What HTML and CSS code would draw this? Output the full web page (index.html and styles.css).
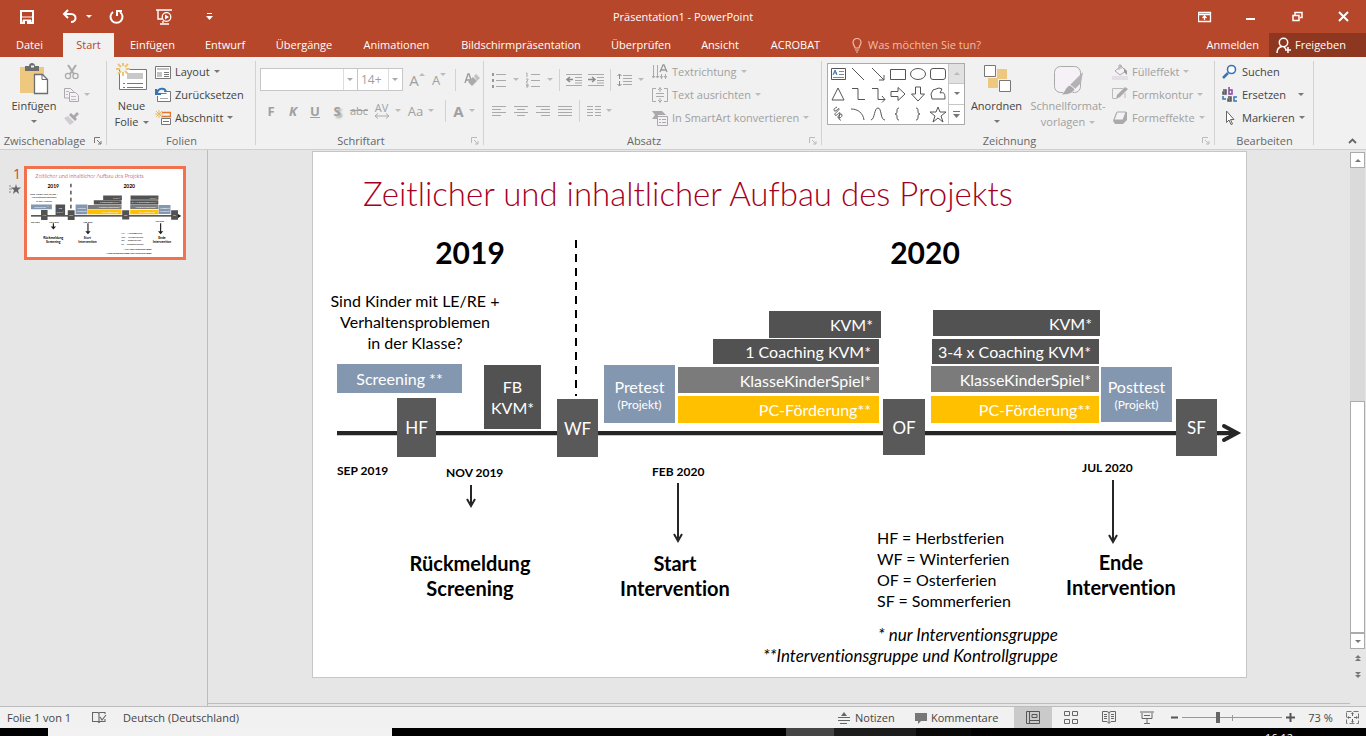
FILE: index.html
```html
<!DOCTYPE html>
<html lang="de">
<head>
<meta charset="utf-8">
<title>Präsentation1 - PowerPoint</title>
<link rel="stylesheet" href="styles.css">
</head>
<body>
<header class="titlebar">
  <div class="quick">
    <button class="q-save" aria-label="Speichern"><svg width="16" height="16" viewBox="0 0 16 16"><path d="M2 2h12v12H2z" fill="none" stroke="#fff" stroke-width="2"/><path d="M2 8h12M4 11h8v3H4z" stroke="#fff" fill="#fff"/><path d="M6 12h2v3H6z" fill="#b7472a"/></svg></button>
    <button class="q-undo" aria-label="Rückgängig"><svg width="16" height="16" viewBox="0 0 16 16"><path d="M6 1 2 5l4 4M2 5h7c6 0 6 8 0 8" fill="none" stroke="#fff" stroke-width="2"/></svg><i class="caret"></i></button>
    <button class="q-redo" aria-label="Wiederholen"><svg width="16" height="16" viewBox="0 0 16 16"><path d="M4 3a6 6 0 1 0 7 0M8 7V2h5" fill="none" stroke="#fff" stroke-width="2"/></svg></button>
    <button class="q-show" aria-label="Von Beginn an"><svg width="18" height="16" viewBox="0 0 18 16"><path d="M1 1h16M3 1v9h4M8 12v2M5 15h9" fill="none" stroke="#fff" stroke-width="1.4"/><circle cx="11.500" cy="8" r="4.300" fill="#b7472a" stroke="#fff" stroke-width="1.300"/><path d="M10 5.500v5l4-2.500z" fill="#fff"/></svg></button>
    <button class="q-more" aria-label="Symbolleiste anpassen"><svg width="7" height="7" viewBox="0 0 7 7"><path d="M1 .5h5" stroke="#fff"/><path d="M0 3h7L3.500 7z" fill="#fff"/></svg></button>
  </div>
  <h1>Präsentation1 - PowerPoint</h1>
  <div class="window-controls">
    <button aria-label="Menüband-Anzeigeoptionen"><svg width="14" height="12" viewBox="0 0 14 12"><path d="M.5 1.500h12v9H.5zM1 3.500h12M6.500 9V5M4.500 7l2-2 2 2" fill="none" stroke="#fff" stroke-width="1.300"/></svg></button>
    <button aria-label="Minimieren"><svg width="10" height="12" viewBox="0 0 10 12"><path d="M0 8h9" stroke="#fff" stroke-width="2"/></svg></button>
    <button aria-label="Verkleinern"><svg width="11" height="11" viewBox="0 0 11 11"><path d="M1 4.500h6v5H1zM3 4V1.500h7v5H8" fill="none" stroke="#fff" stroke-width="1.500"/></svg></button>
    <button aria-label="Schließen"><svg width="11" height="11" viewBox="0 0 11 11"><path d="m1 1 9 9M10 1l-9 9" stroke="#fff" stroke-width="2"/></svg></button>
  </div>
</header>
<nav class="tabs">
  <a class="t-file" href="#">Datei</a><a class="t-start active" href="#">Start</a><a class="t-insert" href="#">Einfügen</a><a class="t-design" href="#">Entwurf</a><a class="t-trans" href="#">Übergänge</a><a class="t-anim" href="#">Animationen</a><a class="t-show" href="#">Bildschirmpräsentation</a><a class="t-review" href="#">Überprüfen</a><a class="t-view" href="#">Ansicht</a><a class="t-acro" href="#">ACROBAT</a>
  <label class="tell"><svg width="10" height="15" viewBox="0 0 10 15"><path d="M3 10C3 8 1 7 1 4.500a4 4 0 0 1 8 0C9 7 7 8 7 10zM3 12h4M4 14h2" fill="none" stroke="#f0bdab" stroke-width="1.200"/></svg><input type="text" placeholder="Was möchten Sie tun?" aria-label="Was möchten Sie tun?"></label>
  <a class="signin" href="#">Anmelden</a>
  <button class="share"><svg width="16" height="17" viewBox="0 0 16 17"><circle cx="7.500" cy="5.500" r="4.200" fill="none" stroke="#fff" stroke-width="1.500"/><path d="M1 16c0-4 2-6 5-6.500M8 10l2 2M12 10v6M9 13h6" fill="none" stroke="#fff" stroke-width="1.500"/></svg>Freigeben</button>
</nav>

<main class="ribbon">
  <section class="group g-clip">
    <div class="group-body">
      <button class="big w-paste"><svg width="30" height="32" viewBox="0 0 30 32"><path d="M1 4h24v26H1z" fill="#edc87e"/><path d="M6 3h4c0-4 6-4 6 0h4v5H6z" fill="#6d6d6d"/><path d="M12 2.500h3v2h-3z" fill="#f1f1f1"/><path d="M15.500 11.500h8l5 5v14h-13z" fill="#fff" stroke="#6d6d6d" stroke-width="1.300"/><path d="M23 11.500v5h5" fill="none" stroke="#6d6d6d"/></svg><span>Einfügen</span><i class="caret"></i></button>
      <div class="stack">
        <button class="row" disabled aria-label="Ausschneiden"><svg width="16" height="16" viewBox="0 0 16 16"><path d="m4 1 6 9M12 1l-6 9" stroke="#aaa" stroke-width="2"/><circle cx="4" cy="12" r="2.600" fill="none" stroke="#aaa" stroke-width="1.300"/><circle cx="11.500" cy="12" r="2.600" fill="none" stroke="#aaa" stroke-width="1.300"/></svg></button>
        <button class="row" disabled aria-label="Kopieren"><svg width="16" height="16" viewBox="0 0 16 16"><path d="M.5 1.500h6l3 3V11h-9z" fill="#f5f0f5" stroke="#aaa"/><path d="M5.500 5.500h6l3 3v6h-9z" fill="#f5f0f5" stroke="#aaa"/><path d="M2 4.500h3M2 7.500h2M7 9.500h5M7 12.500h5" stroke="#bbb"/></svg><i class="caret"></i></button>
        <button class="row" disabled aria-label="Format übertragen"><svg width="16" height="16" viewBox="0 0 16 16"><path d="m9 6 4-4 2 2-4 4" fill="#aaa"/><path d="m7 3 6 6-2 2-6-6z" fill="#a6a6a6"/><path d="m4 6 6 6-4 3-6-7z" fill="#d2ccd2"/></svg></button>
      </div>
    </div>
    <footer>Zwischenablage<button class="launch" aria-label="Zwischenablage öffnen"><svg width="8" height="8" viewBox="0 0 8 8"><path d="M.5 6V.5H6M3 3l4 4M7 4v3H4" fill="none" stroke="#777"/></svg></button></footer>
  </section>
  <section class="group g-slides">
    <div class="group-body">
      <button class="big w-new"><svg width="32" height="32" viewBox="0 0 32 32"><path d="M3.500 6.500h27v20h-27z" fill="#fff" stroke="#777"/><path d="M11 10h16v6H11z" fill="#c8c8c8"/><path d="M7 20.500h2m2 0h16M7 24.500h2m2 0h16" stroke="#777"/><circle cx="7" cy="6" r="3" fill="#f1f1f1"/><path d="M7-1v4M7 9v4M0 6h4M10 6h4M2 1l3 3M9 8l3 3M12 1 9 4M5 8l-3 3" stroke="#ecc574" stroke-width="2"/></svg><span>Neue</span><span>Folie <i class="caret"></i></span></button>
      <div class="stack">
        <button class="row"><svg width="16" height="16" viewBox="0 0 16 16"><path d="M.5 2.500h15v12H.5z" fill="#fff" stroke="#777"/><path d="M2 4h12v2H2zM2 8h5v5H2z" fill="#c4c4c4"/><path d="M9 8.500h5M9 10.500h5M9 12.500h5" stroke="#777"/></svg>Layout<i class="caret"></i></button>
        <button class="row"><svg width="16" height="16" viewBox="0 0 16 16"><path d="M2.500 6.500h9M9 4.500h6.500v10h-13V9" fill="#fff" stroke="#777"/><path d="M5 11.500h8" stroke="#aaa"/><path d="M2 6c1-5 8-6 9-1M1 2v5h5" fill="none" stroke="#3974b5" stroke-width="2"/></svg>Zurücksetzen</button>
        <button class="row"><svg width="16" height="16" viewBox="0 0 16 16"><path d="M6.500 8.500h9v6h-9z" fill="#fff" stroke="#777"/><path d="M8 11.500h6" stroke="#777"/><path d="M7 2.500h8.500v4H6" fill="none" stroke="#df762f" stroke-width="1.500"/><path d="M4 0v8M0 4h8M1 1l6 6M7 1 1 7" stroke="#e9b967"/></svg>Abschnitt<i class="caret"></i></button>
      </div>
    </div>
    <footer>Folien</footer>
  </section>
  <section class="group g-font">
    <div class="group-body lines">
      <div class="line combos">
        <div class="combo c-name"><select aria-label="Schriftart" disabled><option></option></select><i class="caret"></i></div>
        <div class="combo c-size"><select aria-label="Schriftgrad" disabled><option>14+</option></select><i class="caret"></i></div>
        <button class="glyph grow" disabled aria-label="Schriftgrad vergrößern">A<i class="caret up"></i></button>
        <button class="glyph shrink" disabled aria-label="Schriftgrad verkleinern">A<i class="caret"></i></button>
        <i class="sep"></i>
        <button class="glyph" disabled aria-label="Formatierung löschen"><svg width="18" height="18" viewBox="0 0 18 18"><path d="m2 12 3-9h1l2 6M3 9h4" fill="none" stroke="#999" stroke-width="1.300"/><path d="m10 6 4 4-5 5-4-4z" fill="#aaa"/><path d="m11 5 2-2 4 4-3 3z" fill="#c5bfc5"/></svg></button>
      </div>
      <div class="line letters">
        <button class="glyph" disabled><b>F</b></button><button class="glyph" disabled><b><em>K</em></b></button><button class="glyph" disabled><b><u>U</u></b></button><button class="glyph shadow" disabled><b>S</b></button><button class="glyph small" disabled><s>abc</s></button>
        <button class="glyph wide small" disabled><span class="kern">AV<svg width="16" height="6" viewBox="0 0 16 6"><path d="M1 3h14M4 .5 1 3l3 2.500M12 .5 15 3l-3 2.500" fill="none" stroke="#aaa"/></svg></span><i class="caret"></i></button>
        <button class="glyph wide" disabled>Aa<i class="caret"></i></button>
        <i class="sep"></i>
        <button class="glyph wide fontcolor" disabled><b>A</b><i class="caret"></i></button>
      </div>
    </div>
    <footer>Schriftart<button class="launch off" aria-label="Schriftart öffnen"><svg width="8" height="8" viewBox="0 0 8 8"><path d="M.5 6V.5H6M3 3l4 4M7 4v3H4" fill="none" stroke="#bbb"/></svg></button></footer>
  </section>
  <section class="group g-para">
    <div class="group-body">
      <div class="lines para-lines">
        <div class="line">
          <button class="glyph list" disabled aria-label="Aufzählungszeichen"><svg width="14" height="16" viewBox="0 0 14 16"><path d="M4 2.500h10M4 8.500h10M4 14.500h10" stroke="#aaa"/><path d="M0 1h2v3H0zM0 7h2v3H0zM0 13h2v3H0z" fill="#999"/></svg><i class="caret"></i></button>
          <button class="glyph list" disabled aria-label="Nummerierung"><svg width="14" height="16" viewBox="0 0 14 16"><path d="M5 2.500h9M5 8.500h9M5 14.500h9M0 1h1v4M0 7h2v1L0 10h2M0 12h2v3H0M0 13.500h2" fill="none" stroke="#aaa"/></svg><i class="caret"></i></button>
          <i class="sep"></i>
          <button class="glyph" disabled aria-label="Einzug verkleinern"><svg width="16" height="16" viewBox="0 0 16 16"><path d="M0 2.500h16M9 5.500h7M9 8.500h7M0 13.500h16M9 11h7" stroke="#aaa"/><path d="M7 7.500H1M4 5 1 7.500 4 10" fill="none" stroke="#8b8b8b" stroke-width="1.500"/></svg></button>
          <button class="glyph" disabled aria-label="Einzug vergrößern"><svg width="16" height="16" viewBox="0 0 16 16"><path d="M0 2.500h16M9 5.500h7M9 8.500h7M0 13.500h16M9 11h7" stroke="#aaa"/><path d="M0 7.500h6M4 5l3 2.500L4 10" fill="none" stroke="#8b8b8b" stroke-width="1.500"/></svg></button>
          <i class="sep"></i>
          <button class="glyph spacing" disabled aria-label="Zeilenabstand"><svg width="16" height="16" viewBox="0 0 16 16"><path d="M6 3.500h9M6 6.500h9M6 9.500h9M6 12.500h9" stroke="#aaa"/><path d="M2.500 2v5M.5 4l2-2 2 2M2.500 9v5M.5 12l2 2 2-2" fill="none" stroke="#8b8b8b"/></svg><i class="caret"></i></button>
        </div>
        <div class="line">
          <button class="glyph" disabled aria-label="Linksbündig"><svg width="14" height="12" viewBox="0 0 14 12"><path d="M0 1.500h14M0 4.500h9M0 7.500h14M0 10.500h9" stroke="#aaa"/></svg></button>
          <button class="glyph" disabled aria-label="Zentriert"><svg width="14" height="12" viewBox="0 0 14 12"><path d="M0 1.500h14M3 4.500h8M0 7.500h14M3 10.500h8" stroke="#aaa"/></svg></button>
          <button class="glyph" disabled aria-label="Rechtsbündig"><svg width="14" height="12" viewBox="0 0 14 12"><path d="M0 1.500h14M5 4.500h9M0 7.500h14M5 10.500h9" stroke="#aaa"/></svg></button>
          <button class="glyph" disabled aria-label="Blocksatz"><svg width="14" height="12" viewBox="0 0 14 12"><path d="M0 1.500h14M0 4.500h14M0 7.500h14M0 10.500h14" stroke="#aaa"/></svg></button>
          <i class="sep"></i>
          <button class="glyph spacing" disabled aria-label="Spalten"><svg width="14" height="12" viewBox="0 0 14 12"><path d="M0 1.500h6m2 0h6M0 4.500h6m2 0h6M0 7.500h6m2 0h6M0 10.500h6m2 0h6" stroke="#aaa"/></svg><i class="caret"></i></button>
        </div>
      </div>
      <div class="stack">
        <button class="row" disabled><svg width="16" height="16" viewBox="0 0 16 16"><path d="M1.500 1v13M5.500 1v13M9.500 10v5M13.500 10v5M0 12l1.500 2L3 12M4 12l1.500 2L7 12M8 12l1.500 2 1.500-2M12 12l1.500 2 1.500-2" fill="none" stroke="#aaa"/><path d="m8 8 3-7h1l3 7M9 6h5" fill="none" stroke="#999" stroke-width="1.300"/></svg>Textrichtung<i class="caret"></i></button>
        <button class="row" disabled><svg width="16" height="16" viewBox="0 0 16 16"><path d="M4 1.500H.5v13H4M12 1.500h3.500v13H12M4 6.500h8M4 9.500h8M8 0v5M6 3l2-2 2 2M8 11v5M6 13l2 2 2-2" fill="none" stroke="#aaa"/></svg>Text ausrichten<i class="caret"></i></button>
        <button class="row" disabled><svg width="16" height="16" viewBox="0 0 16 16"><path d="M0 1h10l4 4H6v4H0l3-4z" fill="#aaa"/><path d="M5.500 6.500h10v9h-10z" fill="#f5f0f5" stroke="#aaa"/><path d="M7 9.500h2m1 0h4M7 12.500h2m1 0h4" stroke="#aaa"/></svg>In SmartArt konvertieren<i class="caret"></i></button>
      </div>
    </div>
    <footer>Absatz<button class="launch off" aria-label="Absatz öffnen"><svg width="8" height="8" viewBox="0 0 8 8"><path d="M.5 6V.5H6M3 3l4 4M7 4v3H4" fill="none" stroke="#bbb"/></svg></button></footer>
  </section>
  <section class="group g-draw">
    <div class="group-body">
      <div class="gallery">
        <div class="shapes">
          <button aria-label="Textfeld"><svg viewBox="0 0 20 20"><path d="M3.500 4.500h14v11h-14z" fill="#fff" stroke="#555"/><path d="m5 11 2-5 2 5M6 9h3" stroke="#3974b5" fill="none"/><path d="M11 7.500h5M11 10.500h5M5 13.500h11" stroke="#888"/></svg></button>
          <button aria-label="Linie"><svg viewBox="0 0 20 20"><path d="m4 4 12 12"/></svg></button>
          <button aria-label="Pfeil"><svg viewBox="0 0 20 20"><path d="m4 4 12 12M16 11v5h-5"/></svg></button>
          <button aria-label="Rechteck"><svg viewBox="0 0 20 20"><path d="M2.500 5.500h15v10h-15z"/></svg></button>
          <button aria-label="Ellipse"><svg viewBox="0 0 20 20"><ellipse cx="10" cy="10" rx="7.500" ry="5.500"/></svg></button>
          <button aria-label="Abgerundetes Rechteck"><svg viewBox="0 0 20 20"><rect x="2.500" y="4.500" width="15" height="11" rx="2.500"/></svg></button>
          <button aria-label="Dreieck"><svg viewBox="0 0 20 20"><path d="m10 4 6 12H4z"/></svg></button>
          <button aria-label="Gewinkelte Verbindung"><svg viewBox="0 0 20 20"><path d="M4 4.500h6v11h7"/></svg></button>
          <button aria-label="Gewinkelter Pfeil"><svg viewBox="0 0 20 20"><path d="M4 4.500h6v11h7M14 12l3 3.500-3 3"/></svg></button>
          <button aria-label="Pfeil nach rechts"><svg viewBox="0 0 20 20"><path d="M3 7.500h7V3.500l7 6.500-7 6.500v-4H3z"/></svg></button>
          <button aria-label="Pfeil nach unten"><svg viewBox="0 0 20 20"><path d="M7.500 3h5v7h4L10 17l-6.500-7h4z"/></svg></button>
          <button aria-label="Freihandform"><svg viewBox="0 0 20 20"><path d="M5 6 11 4l3 1-2 4c4-1 5 0 5 6H4l-1-5z"/></svg></button>
          <button aria-label="Skizze"><svg viewBox="0 0 20 20"><path d="M9 3C6 4 5 7 7 7s4-4 4-2-5 4-4 6 5-4 5-2-4 5-1 5 4-4 2-4-3 7 0 6"/></svg></button>
          <button aria-label="Bogen"><svg viewBox="0 0 20 20"><path d="M3 5c7 0 12 4 13 11"/></svg></button>
          <button aria-label="Kurve"><svg viewBox="0 0 20 20"><path d="M3 16c4-1 3-12 7-12s2 12 7 12"/></svg></button>
          <button aria-label="Geschweifte Klammer links"><svg viewBox="0 0 20 20"><path d="M11 4c-4 0 0 6-4 6 4 0 0 6 4 6"/></svg></button>
          <button aria-label="Geschweifte Klammer rechts"><svg viewBox="0 0 20 20"><path d="M8 4c4 0 0 6 4 6-4 0 0 6-4 6"/></svg></button>
          <button aria-label="Stern"><svg viewBox="0 0 20 20"><path d="m10 3 2 5h6l-5 4 2 6-5-4-5 4 2-6-5-4h6z"/></svg></button>
        </div>
        <div class="gallery-nav"><button disabled aria-label="Nach oben"><i class="caret up"></i></button><button aria-label="Nach unten"><i class="caret"></i></button><button aria-label="Weitere"><svg width="7" height="7" viewBox="0 0 7 7"><path d="M0 .5h7" stroke="#777"/><path d="M0 3h7L3.500 7z" fill="#777"/></svg></button></div>
      </div>
      <button class="big w-arrange"><svg width="28" height="32" viewBox="0 0 28 32"><path d="M14 6h10v10H14zM5 15h10v10H5z" fill="#edc87e"/><path d="M1.500 2.500h11v11h-11zM16.500 17.500h11v11h-11z" fill="#fff" stroke="#777"/></svg><span>Anordnen</span><i class="caret"></i></button>
      <button class="big w-style" disabled><svg width="32" height="32" viewBox="0 0 32 32"><rect x="2.500" y="3.500" width="26" height="26" rx="6" fill="#f5f1f7" stroke="#aaa"/><path d="m31 9-2 11-6 6-5-4z" fill="#b5b2b5"/><path d="m18 22 5 4c-2 5-8 6-14 6 4-3 4-8 9-10z" fill="#aaa" stroke="#f1f1f1"/></svg><span>Schnellformat-</span><span>vorlagen <i class="caret"></i></span></button>
      <div class="stack">
        <button class="row" disabled><svg width="16" height="16" viewBox="0 0 16 16"><path d="m3 7 6-5 5 5-6 4zM7 6V1h2v4" fill="#f5f0f5" stroke="#aaa"/><path d="m12 4 3 3v4l-3-3z" fill="#999"/><path d="M0 12h16v4H0z" fill="#e4dfe5"/></svg>Fülleffekt<i class="caret"></i></button>
        <button class="row" disabled><svg width="16" height="16" viewBox="0 0 16 16"><path d="M11 1.500H.5v10h4M13 6v5" fill="none" stroke="#bbb"/><path d="m13 0 3 2-8 8-4 2 1-4z" fill="#aaa"/></svg>Formkontur<i class="caret"></i></button>
        <button class="row" disabled><svg width="16" height="16" viewBox="0 0 16 16"><path d="m4 3 11-1v8l-4 4H3L1 11z" fill="#aaa"/><path d="M5 2h9l-3 8H2z" fill="#f5f1f5" stroke="#aaa"/></svg>Formeffekte<i class="caret"></i></button>
      </div>
    </div>
    <footer>Zeichnung<button class="launch off" aria-label="Zeichnung öffnen"><svg width="8" height="8" viewBox="0 0 8 8"><path d="M.5 6V.5H6M3 3l4 4M7 4v3H4" fill="none" stroke="#bbb"/></svg></button></footer>
  </section>
  <section class="group g-edit">
    <div class="group-body">
      <div class="stack">
        <button class="row"><svg width="16" height="16" viewBox="0 0 16 16"><circle cx="9.500" cy="5.500" r="4" fill="#fff" stroke="#3974b5" stroke-width="1.600"/><path d="m6 9-5 5" stroke="#3974b5" stroke-width="2.500"/></svg>Suchen</button>
        <button class="row replace"><svg width="16" height="16" viewBox="0 0 16 16" fill="none" stroke-width="1.500"><path d="M1 3h3v4H1V5h3" stroke="#555"/><path d="M7 0v7h3V3H7" stroke="#8746ab"/><path d="M6 10h3v4H6v-2h3" stroke="#555"/><path d="M15 10h-3v4h3" stroke="#3974b5"/><path d="M1 9v3h3" stroke="#3974b5"/></svg>Ersetzen<i class="caret"></i></button>
        <button class="row"><svg width="16" height="16" viewBox="0 0 16 16"><path d="M4.500 1v11.500L7 10l2 4.500 1.500-.5-2-4.500H12z" fill="#fff" stroke="#666"/></svg>Markieren<i class="caret"></i></button>
      </div>
    </div>
    <footer>Bearbeiten</footer>
  </section>
  <button class="collapse" aria-label="Menüband reduzieren"><svg width="9" height="6" viewBox="0 0 9 6"><path d="m1 5 3.500-3.500L8 5" fill="none" stroke="#666" stroke-width="1.800"/></svg></button>
</main>

<div class="workspace">
  <aside class="thumbs">
    <div class="thumb-meta"><span>1</span><svg width="12" height="10" viewBox="0 0 12 10"><path d="m7 0 1 3.500h4L9 6l1 4-3-2.500L4 10l1-4-3-2.500h4z" fill="#666"/><path d="M0 2h2M0 5h3M0 8h2" stroke="#888"/></svg></div>
    <button class="thumb" aria-label="Folie 1">
      <svg viewBox="0 0 934 526" class="mini">
        <path d="M24 281h894" stroke="#222" stroke-width="7"/><path d="m900 266 22 15-22 15z" fill="#222"/>
        <path d="M263 88v155" stroke="#000" stroke-width="6" stroke-dasharray="22 20"/>
        <path d="M158 325v32M365 325v60M800 325v60" stroke="#222" stroke-width="7"/>
        <path d="M142 345h32l-16 18zM349 372h32l-16 18zM784 372h32l-16 18z" fill="#222"/>
        <path d="M24 212h125v29H24zM291 213h71v58h-71zM788 215h71v55h-71z" fill="#8497b0"/>
        <path d="M84 246h39v59H84zM171 213h57v64h-57zM244 247h41v58h-41zM570 247h42v56h-42zM863 247h41v57h-41zM456 159h112v27H456zM400 187h166v25H400zM620 158h167v26H620zM619 187h167v25H619z" fill="#525252"/>
        <path d="M365 215h201v26H365zM618 214h168v26H618z" fill="#7b7b7b"/><path d="M365 244h201v27H365zM618 244h168v27H618z" fill="#ffc000"/>
        <text x="50" y="52" class="m-title">Zeitlicher und inhaltlicher Aufbau des Projekts</text>
        <g class="m-year"><text x="157" y="112">2019</text><text x="612" y="112">2020</text></g>
        <g class="m-text"><text x="102" y="154">Sind Kinder mit LE/RE +</text><text x="102" y="175">Verhaltensproblemen</text><text x="102" y="196">in der Klasse?</text></g>
        <g class="m-white"><text x="86" y="232">Screening **</text><text x="104" y="282">HF</text><text x="200" y="240">FB</text><text x="200" y="262">KVM*</text><text x="264" y="282">WF</text><text x="327" y="240">Pretest</text><text x="327" y="258">(Projekt)</text><text x="591" y="282">OF</text><text x="884" y="282">SF</text><text x="824" y="240">Posttest</text><text x="824" y="258">(Projekt)</text></g>
        <g class="m-right"><text x="560" y="178">KVM*</text><text x="560" y="206">1 Coaching KVM*</text><text x="560" y="234">KlasseKinderSpiel*</text><text x="560" y="263">PC-Förderung**</text><text x="780" y="178">KVM*</text><text x="780" y="206">3-4 x Coaching KVM*</text><text x="780" y="234">KlasseKinderSpiel*</text><text x="780" y="263">PC-Förderung**</text></g>
        <g class="m-date"><text x="50" y="322">SEP 2019</text><text x="162" y="324">NOV 2019</text><text x="365" y="324">FEB 2020</text><text x="795" y="320">JUL 2020</text></g>
        <g class="m-goal"><text x="157" y="417">Rückmeldung</text><text x="157" y="443">Screening</text><text x="362" y="417">Start</text><text x="362" y="443">Intervention</text><text x="808" y="417">Ende</text><text x="808" y="443">Intervention</text></g>
        <g class="m-legend"><text x="564" y="391">HF = Herbstferien</text><text x="564" y="412">WF = Winterferien</text><text x="564" y="433">OF = Osterferien</text><text x="564" y="454">SF = Sommerferien</text></g>
        <g class="m-note"><text x="745" y="488">* nur Interventionsgruppe</text><text x="745" y="509">**Interventionsgruppe und Kontrollgruppe</text></g>
      </svg>
    </button>
  </aside>
  <div class="editor">
    <article class="slide">
      <svg class="lines-art" width="934" height="524" viewBox="0 0 934 524"><path d="M24 283h890" stroke="#c6c6c6" stroke-width="2"/><path d="M24 281h898" stroke="#262626" stroke-width="4"/><path d="m911 274 13 7-13 7" fill="none" stroke="#262626" stroke-width="4" stroke-linecap="round"/><path d="M263 88v156" stroke="#000" stroke-width="2" stroke-dasharray="8 6"/><path d="M158 333v20m-4-6 4 7 4-7M365 331v57m-4-6 4 7 4-7M800 328v61m-4-6 4 7 4-7" fill="none" stroke="#262626" stroke-width="2"/></svg>
      <h2 class="node s-title">Zeitlicher und inhaltlicher Aufbau des Projekts</h2>
      <h3 class="node year y19">2019</h3><h3 class="node year y20">2020</h3>
      <p class="node question">Sind Kinder mit LE/RE +<br>Verhaltensproblemen<br>in der Klasse?</p>
      <div class="node box blue n-screen">Screening **</div>
      <div class="node box holiday n-hf">HF</div>
      <div class="node box dark n-fb">FB<br>KVM*</div>
      <div class="node box holiday n-wf">WF</div>
      <div class="node box blue n-pre">Pretest<small>(Projekt)</small></div>
      <div class="node box dark bar a1">KVM*</div>
      <div class="node box dark bar a2">1 Coaching KVM*</div>
      <div class="node box gray bar a3">KlasseKinderSpiel*</div>
      <div class="node box gold bar a4">PC-Förderung**</div>
      <div class="node box holiday n-of">OF</div>
      <div class="node box dark bar b1">KVM*</div>
      <div class="node box dark bar b2">3-4 x Coaching KVM*</div>
      <div class="node box gray bar b3">KlasseKinderSpiel*</div>
      <div class="node box gold bar b4">PC-Förderung**</div>
      <div class="node box blue n-post">Posttest<small>(Projekt)</small></div>
      <div class="node box holiday n-sf">SF</div>
      <p class="node date d1">SEP 2019</p><p class="node date d2">NOV 2019</p><p class="node date d3">FEB 2020</p><p class="node date d4">JUL 2020</p>
      <p class="node goal e1">Rückmeldung<br>Screening</p><p class="node goal e2">Start<br>Intervention</p><p class="node goal e3">Ende<br>Intervention</p>
      <p class="node legend">HF = Herbstferien<br>WF = Winterferien<br>OF = Osterferien<br>SF = Sommerferien</p>
      <p class="node note">* nur Interventionsgruppe<br>**Interventionsgruppe und Kontrollgruppe</p>
    </article>
  </div>
  <div class="scroll">
    <button class="sbtn" aria-label="Nach oben scrollen"><i class="caret up"></i></button>
    <div class="track"><div class="knob"></div></div>
    <button class="sbtn" aria-label="Nach unten scrollen"><i class="caret"></i></button>
    <button class="jump" aria-label="Vorherige Folie"><i class="caret up"></i><i class="caret up"></i></button>
    <button class="jump" aria-label="Nächste Folie"><i class="caret"></i><i class="caret"></i></button>
  </div>
</div>

<footer class="status">
  <span class="page-no">Folie 1 von 1</span>
  <button class="spell" aria-label="Rechtschreibung"><svg width="15" height="13" viewBox="0 0 15 13"><path d="M7 2.500 6 1.500H.5v9H6l1 1 1-1h5V8M7 2v9M7 2l1-.5h5V3M8 6l2 3 4-5" fill="none" stroke="#666" stroke-width="1.100"/></svg></button>
  <button class="lang">Deutsch (Deutschland)</button>
  <button class="notes"><svg width="12" height="12" viewBox="0 0 12 12"><path d="M0 5.500h12M0 8.500h12M2 11.500h7" stroke="#666" fill="none"/><path d="m3 4 3-4 3 4z" fill="#666"/></svg>Notizen</button>
  <button class="comments"><svg width="12" height="12" viewBox="0 0 12 12"><path d="M0 1h12v8H6l-3 3V9H0z" fill="#777"/></svg>Kommentare</button>
  <button class="view on" aria-label="Normal"><svg width="14" height="13" viewBox="0 0 14 13"><path d="M.5.5h13v12H.5zM3.500.5v12M6 3.500h5v3H6zM4 9.500h9" fill="none" stroke="#555"/></svg></button>
  <button class="view" aria-label="Foliensortierung"><svg width="14" height="13" viewBox="0 0 14 13"><path d="M.5.5h5v4h-5zM8.500.5h5v4h-5zM.5 8.500h5v4h-5zM8.500 8.500h5v4h-5z" fill="none" stroke="#666"/></svg></button>
  <button class="view" aria-label="Leseansicht"><svg width="14" height="13" viewBox="0 0 14 13"><path d="M.5.5H5l2 1 2-1h4.500v10H9l-2 2-2-2H.5zM7 1v11M2 3.500h3M2 5.500h3M2 7.500h3M9 3.500h3M9 5.500h3M9 7.500h3" fill="none" stroke="#666"/></svg></button>
  <button class="view" aria-label="Bildschirmpräsentation"><svg width="14" height="13" viewBox="0 0 14 13"><path d="M0 1h14M2 2v5.500h10V2M4 4.500h6M7 8v4M4 12.500h6" fill="none" stroke="#666"/></svg></button>
  <div class="zoomer"><button aria-label="Verkleinern"><svg width="7" height="9" viewBox="0 0 7 9"><path d="M0 4.500h7" stroke="#555" stroke-width="2"/></svg></button><div class="slider"><input type="range" min="10" max="190" value="73" aria-label="Zoom"></div><button aria-label="Vergrößern"><svg width="9" height="9" viewBox="0 0 9 9"><path d="M0 4.500h9M4.500 0v9" stroke="#555" stroke-width="2"/></svg></button></div>
  <button class="percent">73 %</button>
  <button class="fit" aria-label="An Fenster anpassen"><svg width="13" height="13" viewBox="0 0 13 13"><path d="M.5.5h12v12H.5z" fill="none" stroke="#777" stroke-dasharray="5 2"/><path d="M6.500 2v3M2 6.500h3M8 6.500h3M6.500 8v3" stroke="#666"/><path d="m5 3 1.500-2L8 3zM3 5 1 6.500 3 8zM10 5l2 1.500L10 8zM5 10l1.500 2L8 10z" fill="#666"/></svg></button>
</footer>
<div class="taskbar"><div class="search"></div><div class="photo"></div><time>16:12</time></div>
</body>
</html>
```
FILE: styles.css
```css
* { box-sizing: border-box; }
body {
  margin: 0;
  height: 100vh;
  overflow: hidden;
  display: flex;
  flex-direction: column;
  font: 11px/16px "Open Sans", "Noto Sans", sans-serif;
  color: #444;
  background: #e6e6e6;
}
button, select, input { font: inherit; color: inherit; border: 0; background: none; padding: 0; margin: 0; }
button { display: flex; align-items: center; justify-content: center; white-space: nowrap; }
svg { display: block; flex: none; }
a { color: inherit; text-decoration: none; }
h1, h2, h3, p { margin: 0; font-weight: 400; }

.caret { flex: none; width: 0; height: 0; border: 3px solid transparent; border-top-color: currentColor; border-bottom: 0; color: #777; }
.caret.up { border-top: 0; border-bottom: 3px solid #777; }
:disabled .caret { color: #bbb; }
:disabled .caret.up { border-bottom-color: #bbb; }

/* Title bar */
.titlebar { flex: none; height: 33px; display: grid; grid-template-columns: 1fr auto 1fr; align-items: center; background: #b7472a; color: #fff; }
.titlebar h1 { font-size: 11px; }
.quick { display: flex; align-items: center; height: 30px; padding-left: 19px; }
.quick .caret { color: #fff; }
.q-undo { gap: 8px; margin-left: 27px; }
.q-redo { margin-left: 17px; }
.q-show { margin-left: 30px; }
.q-more { margin-left: 33px; }
.window-controls { display: flex; justify-content: flex-end; height: 30px; }
.window-controls button { width: 46px; }

/* Tabs */
.tabs { flex: none; height: 24px; display: flex; background: #b7472a; color: #fff; }
.tabs a { display: flex; align-items: center; justify-content: center; white-space: nowrap; }
.t-file { width: 63px; padding-right: 4px; }
.t-start { width: 51px; }
.tabs .active { background: #f1f1f1; color: #c43e1c; }
.t-insert { width: 77px; }
.t-design { width: 68px; }
.t-trans { width: 90px; }
.t-anim { width: 95px; }
.t-show { width: 154px; }
.t-review { width: 86px; }
.t-view { width: 72px; }
.t-acro { width: 79px; }
.tell { flex: 1; display: flex; align-items: center; gap: 6px; padding-left: 17px; }
.tell input { flex: 1; min-width: 0; }
.tell input::placeholder { color: #f0bdab; opacity: 1; }
.signin { padding: 0 10px; }
.share { width: 97px; gap: 3px; padding-left: 7px; justify-content: flex-start; background: #8e3720; }

/* Ribbon */
.ribbon { flex: none; height: 93px; display: flex; background: #f1f1f1; border-bottom: 1px solid #cfcfcf; }
.group { flex: none; display: flex; flex-direction: column; padding-top: 3px; position: relative; }
.group::after { content: ""; position: absolute; right: 0; top: 4px; bottom: 4px; border-right: 1px solid #d2d2d2; }
.group-body { height: 72px; display: flex; }
.group footer { display: flex; justify-content: center; align-items: center; height: 17px; padding-right: 18px; color: #666; position: relative; }
.launch { position: absolute; right: 5px; top: 5px; }
.g-clip { width: 107px; }
.g-slides { width: 149px; }
.g-slides footer, .g-edit footer { padding-right: 0; }
.g-font { width: 228px; }
.g-para { width: 338px; }
.g-draw { width: 393px; }
.g-edit { width: 99px; }
.big { flex-direction: column; justify-content: flex-start; padding-top: 3px; }
.big svg { margin-bottom: 3px; }
.big span { display: flex; align-items: center; gap: 4px; }
.big > .caret { margin-top: 6px; }
.w-paste { width: 68px; }
.w-new { width: 49px; }
.w-arrange { width: 63px; }
.w-style { width: 80px; }
.stack { display: flex; flex-direction: column; }
.row { height: 23px; gap: 4px; justify-content: flex-start; }
button:disabled { color: #a0a0a0; }
.g-clip .stack { margin-left: -4px; }
.lines { padding: 8px 0 0 4px; display: flex; flex-direction: column; gap: 8px; }
.line { display: flex; align-items: center; height: 23px; }
.sep { width: 1px; height: 22px; margin: 0 5px; background: #d2d2d2; }
.combo { display: flex; align-items: center; position: relative; height: 23px; border: 1px solid #c6c6c6; background: #fff; }
.combo select { appearance: none; width: 100%; height: 100%; padding-left: 3px; font-size: 12px; color: #a0a0a0; opacity: 1; }
.combo .caret { position: absolute; right: 4px; top: 9px; color: #aaa; }
.combo::after { content: ""; position: absolute; right: 13px; top: 0; bottom: 0; border-right: 1px solid #ddd; }
.c-name { width: 98px; }
.c-size { width: 46px; margin-left: -1px; }
.glyph { width: 22px; height: 22px; gap: 5px; font-size: 13px; }
.grow, .shrink { gap: 0; line-height: 22px; }
.grow .caret, .shrink .caret { align-self: flex-start; margin-top: 4px; }
.grow { margin-left: 3px; font-size: 15px; }
.wide { width: 34px; }
.list { width: 34px; gap: 7px; }
.spacing { width: 32px; }
.letters .sep { margin: 0 1px 0 7px; }
.small { font-size: 11px; }
.shadow { text-shadow: 2px 2px 2px #aaa; }
.kern { display: flex; flex-direction: column; align-items: center; line-height: 11px; }
.fontcolor { font-size: 15px; }
.para-lines .sep { margin: 0 3px; }
.g-para .stack { margin-left: 6px; }
.g-slides .stack { margin-left: -1px; }
.gallery { display: flex; width: 138px; height: 62px; margin: 3px 0 0 5px; border: 1px solid #ababab; background: #fff; }
.shapes { display: grid; grid-template-columns: repeat(6, 20px); grid-template-rows: repeat(3, 20px); }
.shapes svg { width: 20px; height: 20px; fill: none; stroke: #555; }
.gallery-nav { flex: 1; display: flex; flex-direction: column; border-left: 1px solid #c6c6c6; }
.gallery-nav button { flex: 1; border-bottom: 1px solid #c6c6c6; }
.gallery-nav button:last-child { border-bottom: 0; }
.gallery-nav button:disabled { background: #e1e1e1; }
.g-draw .stack { margin-left: 4px; }
.g-edit .stack { padding-left: 7px; }
.replace .caret { margin-left: 8px; }
.collapse { margin-left: auto; align-self: flex-end; width: 28px; height: 17px; }

/* Workspace */
.workspace { flex: 1; min-height: 0; display: flex; }
.thumbs { flex: none; width: 208px; display: flex; align-items: flex-start; gap: 3px; padding: 16px 0 0 9px; border-right: 1px solid #bdbdbd; }
.thumb-meta { width: 12px; display: flex; flex-direction: column; align-items: flex-end; gap: 2px; color: #d24726; font-size: 14px; }
.thumb { width: 162px; border: 3px solid #f2714f; background: #fff; }
.mini { width: 100%; font-family: Lato, sans-serif; font-size: 16px; }
.m-title { font-size: 33px; font-weight: 300; fill: #a50021; }
.m-year { font-size: 30px; font-weight: 700; text-anchor: middle; }
.m-text { text-anchor: middle; }
.m-white { fill: #fff; text-anchor: middle; }
.m-right { fill: #fff; text-anchor: end; }
.m-date { font-size: 12px; font-weight: 700; text-anchor: middle; }
.m-goal { font-size: 20px; font-weight: 700; text-anchor: middle; }
.m-note { font-style: italic; text-anchor: end; }
.editor { flex: 1; min-width: 0; padding: 1px 103px 25px 104px; border-bottom: 1px solid #bdbdbd; margin-bottom: 2px; }
.slide { position: relative; height: 100%; border: 1px solid #c6c6c6; background: #fff; color: #000; font: 16px/21px Lato, sans-serif; font-variant-ligatures: none; }
.lines-art { position: absolute; left: 0; top: 0; }
.node { position: absolute; white-space: nowrap; }
.s-title { left: 50px; top: 20px; font-size: 33px; line-height: 42px; font-weight: 300; color: #a50021; }
.year { width: 90px; top: 80px; font-size: 30px; line-height: 40px; font-weight: 700; text-align: center; }
.y19 { left: 112px; }
.y20 { left: 567px; }
.question { left: 12px; top: 138px; width: 180px; text-align: center; }
.box { display: flex; flex-direction: column; align-items: center; justify-content: center; color: #fff; text-align: center; }
.box small { font-size: 12px; line-height: 16px; }
.blue { background: #8497b0; }
.dark { background: #525252; }
.gray { background: #7b7b7b; }
.gold { background: #ffc000; }
.holiday { background: #595959; font-size: 17px; }
.bar { align-items: flex-end; padding-right: 8px; }
.n-screen { left: 24px; top: 212px; width: 125px; height: 29px; }
.n-hf { left: 84px; top: 246px; width: 39px; height: 59px; }
.n-fb { left: 171px; top: 213px; width: 57px; height: 64px; }
.n-wf { left: 244px; top: 247px; width: 41px; height: 58px; }
.n-pre { left: 291px; top: 213px; width: 71px; height: 58px; }
.a1 { left: 456px; top: 159px; width: 112px; height: 27px; }
.a2 { left: 400px; top: 187px; width: 166px; height: 25px; }
.a3 { left: 365px; top: 215px; width: 201px; height: 26px; }
.a4 { left: 365px; top: 244px; width: 201px; height: 27px; }
.n-of { left: 570px; top: 247px; width: 42px; height: 56px; }
.b1 { left: 620px; top: 158px; width: 167px; height: 26px; }
.b2 { left: 619px; top: 187px; width: 167px; height: 25px; }
.b3 { left: 618px; top: 214px; width: 168px; height: 26px; }
.b4 { left: 618px; top: 244px; width: 168px; height: 27px; }
.n-post { left: 788px; top: 215px; width: 71px; height: 55px; }
.n-sf { left: 863px; top: 247px; width: 41px; height: 57px; }
.date { font-size: 12px; line-height: 16px; font-weight: 700; }
.d1 { left: 24px; top: 311px; }
.d2 { left: 133px; top: 313px; }
.d3 { left: 339px; top: 312px; }
.d4 { left: 769px; top: 308px; }
.goal { width: 140px; font-size: 20px; line-height: 25px; font-weight: 700; text-align: center; }
.e1 { left: 87px; top: 399px; }
.e2 { left: 292px; top: 399px; }
.e3 { left: 738px; top: 398px; }
.legend { left: 564px; top: 375px; }
.note { right: 188px; top: 472px; font-size: 17px; font-style: italic; text-align: right; }

.scroll { flex: none; width: 15px; margin-right: 1px; display: flex; flex-direction: column; padding: 2px 0 23px; }
.sbtn { height: 16px; border: 1px solid #ababab; background: #fff; }
.track { flex: 1; display: flex; flex-direction: column; justify-content: flex-end; background: #dadada; }
.knob { height: 50%; border: 1px solid #ababab; background: #fff; }
.jump { height: 17px; flex-direction: column; }

/* Status bar */
.status { flex: none; height: 22px; display: flex; align-items: center; border-top: 1px solid #bdbdbd; background: #f1f1f1; }
.page-no { width: 92px; padding-left: 7px; }
.spell { margin-right: 16px; }
.lang { margin-right: auto; }
.notes { gap: 5px; width: 57px; justify-content: flex-start; margin-right: 20px; }
.comments { gap: 4px; width: 99px; justify-content: flex-start; }
.view { width: 38px; height: 21px; }
.on { background: #cacaca; }
.zoomer { display: flex; align-items: center; gap: 4px; margin-left: 5px; }
.slider { width: 100px; height: 12px; display: flex; position: relative; background: linear-gradient(#999, #999) center / 100% 1px no-repeat; }
.slider::after { content: ""; position: absolute; left: 50px; top: 3px; width: 1px; height: 6px; background: #999; }
.slider input { appearance: none; width: 100%; }
.slider input::-webkit-slider-thumb { appearance: none; width: 4px; height: 11px; background: #666; }
.percent { width: 51px; }
.fit { margin-right: 7px; }

.taskbar { flex: none; height: 8px; display: flex; overflow: hidden; background: #000; color: #fff; }
.search { width: 344px; margin-left: 48px; background: #f2f2f2; }
.photo { width: 185px; margin-left: 394px; background: linear-gradient(90deg, #444 0 48px, #1c1c1c 48px 130px, #080808 130px); }
.taskbar time { margin-left: auto; padding: 2px 73px 0 0; }
```
